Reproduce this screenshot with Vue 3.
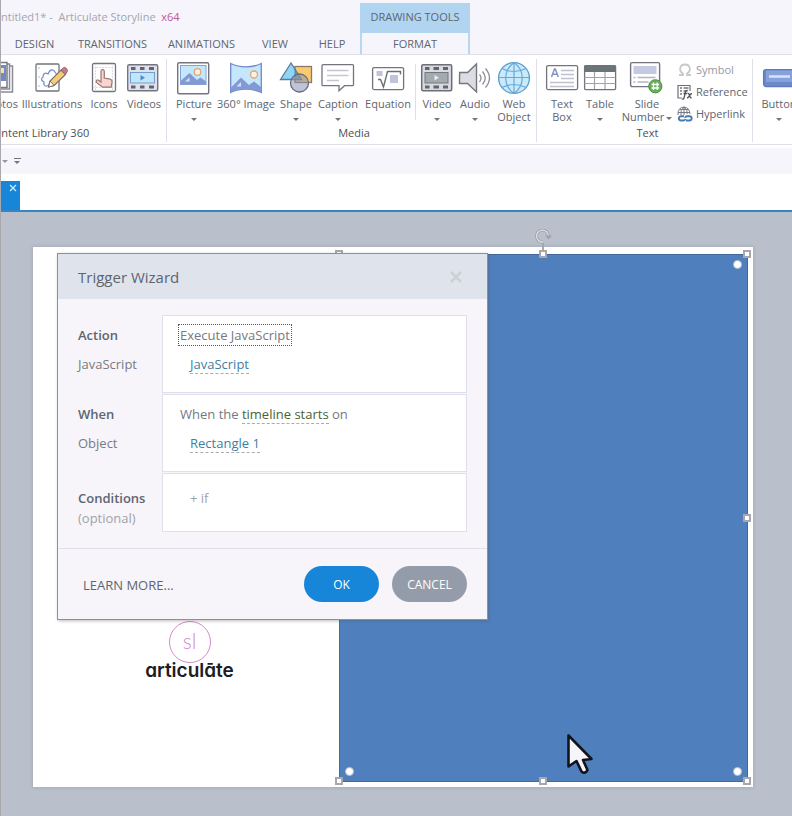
<script setup>
import { ref } from 'vue'

const tabs = [
  { name: 'DESIGN', cls: 'w67' },
  { name: 'TRANSITIONS', cls: 'w89' },
  { name: 'ANIMATIONS', cls: 'w89' },
  { name: 'VIEW', cls: 'w58' },
  { name: 'HELP', cls: 'w56' },
]

const library = [
  { icon: 'photos', label: 'Photos', cls: 'w40' },
  { icon: 'illustrations', label: 'Illustrations', cls: 'w64' },
  { icon: 'icons', label: 'Icons', cls: 'w40' },
  { icon: 'videos', label: 'Videos', cls: 'w40' },
]
const mediaA = [
  { icon: 'picture', label: 'Picture', cls: 'w40', menu: true },
  { icon: 'pano', label: '360° Image', cls: 'w64' },
  { icon: 'shape', label: 'Shape', cls: 'w36', menu: true },
  { icon: 'caption', label: 'Caption', cls: 'w48', menu: true },
  { icon: 'equation', label: 'Equation', cls: 'w52' },
]
const mediaB = [
  { icon: 'video', label: 'Video', cls: 'w38', menu: true },
  { icon: 'audio', label: 'Audio', cls: 'w38', menu: true },
  { icon: 'web', label: 'Web Object', cls: 'w40' },
]
const textTools = [
  { icon: 'textbox', label: 'Text Box', cls: 'w36' },
  { icon: 'table', label: 'Table', cls: 'w40', menu: true },
  { icon: 'slidenum', label: 'Slide Number', cls: 'w54', inlineMenu: true },
]
const textLinks = [
  { icon: 'symbol', label: 'Symbol', off: true },
  { icon: 'reference', label: 'Reference' },
  { icon: 'hyperlink', label: 'Hyperlink' },
]
const handles = ['nw', 'n', 'ne', 'e', 'se', 's', 'sw', 'w']
const open = ref(true)
</script>

<template>
  <div class="window">
    <svg class="sprite" aria-hidden="true">
      <symbol id="photos" viewBox="0 0 36 36">
        <path d="M8 6h22.500v26H8z" fill="#fff" stroke="#8b8b97" stroke-width="1.500" />
        <path d="M5 4h22.500v25H5z" fill="#fff" stroke="#8b8b97" stroke-width="1.500" />
        <path d="M3 2.500h22v25H3z" fill="#fff" stroke="#777985" stroke-width="1.500" />
        <path d="M5 5h19v16H5z" fill="#7189c8" />
        <path d="M19 8h3v5h-3z" fill="#f6e3a0" />
      </symbol>
      <symbol id="illustrations" viewBox="0 0 36 36">
        <rect x="2" y="4" width="23" height="27" rx="1" fill="#fff" stroke="#74747e" stroke-width="1.300" />
        <path d="M4 8h2M4 17h2M4 26h2" stroke="#b9b9c6" />
        <path d="M15 25c-3 2-6 1-5-3-2-1-4-3-1-5 0-3 2-5 5-3 2-5 5-5 7-2l2 3" fill="none" stroke="#7c8fce" stroke-width="1.300" />
        <path d="M14.500 27l1.500-6L27 10l4.500 4.500-11.300 11z" fill="#f6cd76" stroke="#77706c" stroke-width="1.200" />
        <path d="M14.500 27l1.500-6 4.200 4.500z" fill="#fff" stroke="#77706c" />
        <path d="M27 10l2.500-2.300c1.600-1.200 4.500 1.200 3.800 3.600l-1.800 3.200z" fill="#c9798c" stroke="#8b6a78" />
      </symbol>
      <symbol id="icons" viewBox="0 0 36 36">
        <rect x="6.500" y="3.500" width="23" height="28" rx="1.500" fill="#fff" stroke="#74747e" stroke-width="1.300" />
        <path d="M9.500 4v27M26.500 4v27M7 7.500h22M7 27.500h22" stroke="#dcdce6" stroke-dasharray="2 1" />
        <path d="M15 22V11.500c0-2.400 3.300-2.400 3.300 0v6.500l6 1.200c1.600.5 1.900 1.500 1.700 3l-.8 5H16.600L10.500 22.400c-1-1.700.6-3 2-2.200z" fill="#f9d5cf" stroke="#9c7671" stroke-width="1.200" />
      </symbol>
      <symbol id="videos" viewBox="0 0 36 36">
        <rect x="1.700" y="4.700" width="30" height="26" rx="1.500" fill="#dfe1ec" stroke="#74747e" stroke-width="1.400" />
        <path d="M5 8.500h4.500M14 8.500h4.500M23 8.500h5M5 27h4.500M14 27h4.500M23 27h5" stroke="#62656e" stroke-width="3" />
        <rect x="4.500" y="12.500" width="24" height="10.500" fill="#c3e5fc" stroke="#6f9fce" />
        <path d="M14.500 15v5.500l4.500-2.700z" fill="#4f8ac4" />
      </symbol>
      <symbol id="picture" viewBox="0 0 36 36">
        <rect x="1.700" y="2.700" width="31" height="31" rx="1.500" fill="#fff" stroke="#74747e" stroke-width="1.400" />
        <rect x="4.500" y="5.500" width="25.500" height="19" fill="#c5e7fd" stroke="#84a3d8" />
        <circle cx="21.500" cy="12" r="3.300" fill="#fff3da" stroke="#dfa57d" stroke-width="1.300" />
        <path d="M4.500 21l9-8 7.500 7 3.500-2.500 5.500 4v3H4.500z" fill="#8299d4" />
        <path d="M9 21.500l4.500-4v4z" fill="#d5e0f7" />
      </symbol>
      <symbol id="pano" viewBox="0 0 36 36">
        <path d="M2.700 3.500C12 8 24 8 33.300 3.500v29C24 28 12 28 2.700 32.500z" fill="#c5e7fd" stroke="#7189c8" stroke-width="1.300" />
        <circle cx="26" cy="14.500" r="3.500" fill="#fff3da" stroke="#dfa57d" stroke-width="1.300" />
        <path d="M3 27.500l10-10 8 7.500 5-3.500 7 5.500v5.200C24 28 12 28 3 32.200z" fill="#8299d4" />
        <path d="M8.500 26.500L13 22v4.500z" fill="#d5e0f7" />
      </symbol>
      <symbol id="shape" viewBox="0 0 36 36">
        <rect x="17" y="6.500" width="16.500" height="16" fill="#f9cb70" stroke="#88796a" stroke-width="1.300" />
        <path d="M13 3L2.500 19.500h21z" fill="#8fd5fa" stroke="#5a7c99" stroke-width="1.300" />
        <path d="M17 9.500l6.500 10H17z" fill="#86a07c" stroke="#5a7c99" />
        <circle cx="21.500" cy="23" r="9" fill="#8b92b4" fill-opacity=".55" stroke="#676b7c" stroke-width="1.300" />
      </symbol>
      <symbol id="caption" viewBox="0 0 36 36">
        <path d="M2.500 4.700h30q1 0 1 1v19q0 1-1 1h-8l-5.500 5v-5h-16q-1 0-1-1v-19q0-1 1-1z" fill="#fff" stroke="#74747e" stroke-width="1.300" />
        <path d="M7 10.500h21.500M7 15.500h21.500M7 20.500h12" stroke="#c6c6d2" stroke-width="1.500" />
      </symbol>
      <symbol id="equation" viewBox="0 0 36 36">
        <rect x="2.600" y="7.600" width="31" height="22" rx="1.500" fill="#fff" stroke="#74747e" stroke-width="1.300" />
        <path d="M6.500 11h6v5h-6zM20 15h8v8h-8z" fill="#c1c3dc" />
        <path d="M8 19.500h2.500l3 7.500 4-15.500h13v3" fill="none" stroke="#6b6f79" stroke-width="1.400" />
      </symbol>
      <symbol id="video" viewBox="0 0 36 36">
        <rect x="2.700" y="4.700" width="30" height="26" rx="1.500" fill="#d9d9e0" stroke="#6c6f77" stroke-width="1.500" />
        <path d="M6 8.500h4.500M14.500 8.500h5.500M24 8.500h5M6 27h4.500M14.500 27h5.500M24 27h5" stroke="#62656b" stroke-width="3" />
        <rect x="6" y="12.500" width="23" height="10.500" fill="#a3abae" stroke="#70787c" />
        <path d="M15.500 15v5.500l4.500-2.700z" fill="#e8eff1" />
      </symbol>
      <symbol id="audio" viewBox="0 0 36 36">
        <path d="M2.600 12.500h8L19.500 4v28l-9-8.500h-8z" fill="#dcdce2" stroke="#74777f" stroke-width="1.400" />
        <path d="M22.500 14.500q3 3.500 0 7.500M25.500 11.500q5.500 6.500 0 13M28.500 8.500q8 9.500 0 19" fill="none" stroke="#8c8f98" stroke-width="1.300" />
      </symbol>
      <symbol id="web" viewBox="0 0 36 36">
        <circle cx="18" cy="18" r="15.400" fill="#c9eafd" stroke="#589cca" stroke-width="1.300" />
        <path d="M18 2.500v31M2.500 17.500h31M18 2.500c-11 8-11 23 0 31M18 2.500c11 8 11 23 0 31M6 8.500q12 6 24 0M6 27.500q12-6 24 0" fill="none" stroke="#69a9d4" stroke-width="1.200" />
      </symbol>
      <symbol id="textbox" viewBox="0 0 36 36">
        <rect x="2.600" y="5.600" width="31" height="24" rx="1.500" fill="#fff" stroke="#74747e" stroke-width="1.300" />
        <path d="M7.500 17l3-8h.8l3 8M8.500 14.300h5" fill="none" stroke="#8294cd" stroke-width="1.500" />
        <path d="M17 10.500h13M17 14.500h13M17 18.500h13M6 22.500h24M6 26.500h24" stroke="#bfc0d0" stroke-width="1.400" />
      </symbol>
      <symbol id="table" viewBox="0 0 36 36">
        <rect x="2.600" y="5.600" width="31" height="24" rx="1" fill="#fff" stroke="#74747e" stroke-width="1.300" />
        <path d="M2.500 5.500h31v6.500h-31z" fill="#6b7579" />
        <path d="M2.500 17.500h31M2.500 23.500h31M12.500 12v17M23 12v17" stroke="#a2a2af" stroke-width="1.200" />
      </symbol>
      <symbol id="slidenum" viewBox="0 0 36 36">
        <rect x="1.600" y="2.600" width="29" height="24" rx="1.500" fill="#fff" stroke="#74747e" stroke-width="1.400" />
        <path d="M4.500 6h23v8h-23z" fill="#c4cae2" />
        <path d="M4.500 17.500h2M8.500 17.500h18M4.500 22h2M8.500 22h11" stroke="#b4b5c4" stroke-width="1.500" />
        <circle cx="26.300" cy="26.300" r="6.600" fill="#69ad58" stroke="#4e8f45" />
        <path d="M24.500 22.500v7.500M28.200 22.500v7.500M22.500 24.500h7.700M22.500 28h7.700" stroke="#fff" stroke-width="1.300" />
      </symbol>
      <symbol id="button" viewBox="0 0 36 36">
        <rect x="2.600" y="9.600" width="40" height="17" rx="2.500" fill="#6d89cc" stroke="#6179b8" stroke-width="1.300" />
        <path d="M5 10.500h35v11.500H5z" fill="#86a2dc" />
        <path d="M8 16.500h21" stroke="#d8e3fa" stroke-width="2.500" />
      </symbol>
      <symbol id="symbol" viewBox="0 0 16 16">
        <path d="M2 13h4v-1.500C1.500 9 2.500 2.500 8 2.500s6.500 6.500 2 9V13h4" fill="none" stroke="#c8c8cd" stroke-width="1.800" />
      </symbol>
      <symbol id="reference" viewBox="0 0 16 16">
        <path d="M5 14H1V1.500h12V7" fill="none" stroke="#6e7076" stroke-width="1.200" />
        <path d="M3 4h2M6.500 4h5M3 7h2M6.500 7h4M3 10h2" stroke="#75777d" stroke-width="1.700" />
        <path d="M10.500 6.500q-1.800-.5-2.200 2L7 14q-.5 1.500-2 1M6.500 9.500h3.500M10.500 9.500q1.500-.4 2 2t2 2.500M15 9.500q-1.500.3-2.500 2.200T10 14" fill="none" stroke="#505258" stroke-width="1.300" />
      </symbol>
      <symbol id="hyperlink" viewBox="0 0 16 16">
        <path d="M1 9q-.5-7.500 6-8 5.500.5 6 7M1 6.500h12M7 1v8M7 1Q3 4 4 9M7 1q4 3 3.200 7M2.500 3.500h9" fill="none" stroke="#777a80" />
        <path d="M7 10.200H4a2 2 0 0 0 0 4.300h2.500q1.500 0 2-1.500M9 14.500h3.500a2 2 0 0 0 0-4.300H10q-1.500 0-2 1.500" fill="none" stroke="#447bb3" stroke-width="1.900" />
      </symbol>
    </svg>

    <header class="header">
      <div class="title">ntitled1* -&nbsp; Articulate Storyline&nbsp; <span class="arch">x64</span></div>
      <nav class="tabs">
        <button v-for="t in tabs" :key="t.name" class="tab" :class="t.cls">{{ t.name }}</button>
      </nav>
      <div class="context">
        <div class="context-name">DRAWING TOOLS</div>
        <button class="tab context-tab">FORMAT</button>
      </div>
    </header>

    <section class="ribbon">
      <div class="group library">
        <div class="tools">
          <button v-for="i in library" :key="i.icon" class="tool" :class="i.cls">
            <svg class="icon"><use :href="'#' + i.icon" /></svg>
            <span class="label">{{ i.label }}</span>
          </button>
        </div>
        <div class="group-name">Content Library 360</div>
      </div>
      <div class="group media">
        <div class="tools">
          <button v-for="i in mediaA" :key="i.icon" class="tool" :class="i.cls">
            <svg class="icon"><use :href="'#' + i.icon" /></svg>
            <span class="label">{{ i.label }}</span>
            <i v-if="i.menu" class="caret"></i>
          </button>
          <span class="rule"></span>
          <button v-for="i in mediaB" :key="i.icon" class="tool" :class="i.cls">
            <svg class="icon"><use :href="'#' + i.icon" /></svg>
            <span class="label" :class="{ wrap: i.icon === 'web' }">{{ i.label }}</span>
            <i v-if="i.menu" class="caret"></i>
          </button>
        </div>
        <div class="group-name">Media</div>
      </div>
      <div class="group">
        <div class="tools">
          <button v-for="i in textTools" :key="i.icon" class="tool" :class="i.cls">
            <svg class="icon"><use :href="'#' + i.icon" /></svg>
            <span class="label wrap">{{ i.label }}<i v-if="i.inlineMenu" class="caret inline"></i></span>
            <i v-if="i.menu" class="caret"></i>
          </button>
          <div class="links">
            <button v-for="l in textLinks" :key="l.icon" class="link" :class="{ off: l.off }">
              <svg class="mini"><use :href="'#' + l.icon" /></svg>{{ l.label }}
            </button>
          </div>
        </div>
        <div class="group-name">Text</div>
      </div>
      <div class="group last">
        <div class="tools">
          <button class="tool w38">
            <svg class="icon"><use href="#button" /></svg>
            <span class="label">Button</span>
            <i class="caret"></i>
          </button>
        </div>
      </div>
    </section>

    <div class="quickbar">
      <i class="caret pale"></i>
      <i class="overflow"></i>
    </div>

    <div class="doctabs">
      <div class="doctab">
        <button class="doctab-close" aria-label="Close tab">
          <svg viewBox="0 0 8 8"><path d="M1 1l6 6M7 1L1 7" stroke="#c9ecff" stroke-width="1.300" /></svg>
        </button>
      </div>
    </div>

    <main class="canvas">
      <div class="slide">
        <div class="logo">
          <span class="ring">sl</span>
          <span class="brand">articulāte</span>
        </div>
        <div class="rect">
          <svg class="rotate" viewBox="0 0 18 22">
            <path d="M9 14v8" stroke="#a5a7ae" stroke-width="2" />
            <path d="M9.500 13A6 6 0 1 1 14.500 7" fill="none" stroke="#9fa2aa" stroke-width="3" />
            <path d="M9.500 13A6 6 0 1 1 14.500 7" fill="none" stroke="#dcdfe4" stroke-width="1.300" />
            <path d="M11 6.500h7l-3.500 4z" fill="#9fa2aa" />
          </svg>
          <i v-for="h in handles" :key="h" class="handle" :class="h"></i>
          <i class="dot d-ne"></i><i class="dot d-se"></i><i class="dot d-sw"></i>
        </div>
      </div>

      <form v-if="open" class="dialog" @submit.prevent>
        <div class="dialog-head">
          <h1>Trigger Wizard</h1>
          <button type="button" class="close" aria-label="Close" @click="open = false">
            <svg viewBox="0 0 12 12"><path d="M1 1l10 10M11 1L1 11" stroke="#cfd0d7" stroke-width="2.600" /></svg>
          </button>
        </div>
        <div class="fields">
          <div class="names">
            <strong>Action</strong>
            <span>JavaScript</span>
          </div>
          <div class="box">
            <div><a href="#action" class="focused">Execute JavaScript</a></div>
            <div class="sub"><a href="#script" class="pick">JavaScript</a></div>
          </div>
          <div class="names">
            <strong>When</strong>
            <span>Object</span>
          </div>
          <div class="box">
            <div>When the&nbsp;<a href="#when" class="pick green">timeline starts</a> on</div>
            <div class="sub"><a href="#object" class="pick">Rectangle 1</a></div>
          </div>
          <div class="names cond">
            <strong>Conditions</strong>
            <span class="faint">(optional)</span>
          </div>
          <div class="box cond">
            <div class="sub"><button type="button" class="add">+ if</button></div>
          </div>
        </div>
        <div class="dialog-foot">
          <a href="#learn" class="learn">LEARN MORE...</a>
          <button class="pill ok">OK</button>
          <button type="button" class="pill cancel">CANCEL</button>
        </div>
      </form>

      <svg class="cursor" viewBox="0 0 28 42">
        <path d="M2.500 2.500v31l8-5.500 5 10.500q3.500 3 6-1.500L17 27l8.500-1z" fill="#f6f5fa" stroke="#10151d" stroke-width="2.600" stroke-linejoin="round" />
      </svg>
    </main>
  </div>
</template>

<style>
body {
  background: #b9c0cb;
}
</style>

<style scoped>
* {
  box-sizing: border-box;
}
.window {
  display: flex;
  flex-direction: column;
  min-height: 100vh;
  border-left: 1px solid #a9a9ad;
  background: #fff;
  color: #5d6570;
  font: 11px/13px "Open Sans", "Noto Sans", sans-serif;
  overflow: hidden;
}
.sprite {
  position: absolute;
  width: 0;
  height: 0;
}
button {
  padding: 0;
  border: 0;
  background: none;
  color: inherit;
  font: inherit;
}
a {
  color: inherit;
  text-decoration: none;
}

.header {
  display: grid;
  grid-template: 33px 21px / auto 1fr;
  background: #f6f5fb;
  border-bottom: 1px solid #dfdfea;
}
.title {
  align-self: center;
  color: #a5a5ab;
  white-space: nowrap;
}
.arch {
  color: #bd579c;
}
.tabs {
  grid-row: 2;
  display: flex;
}
.context {
  grid-area: 1 / 2 / 3 / 3;
  display: grid;
  grid-template-rows: 30px 21px;
  width: 110px;
  padding-top: 3px;
}
.context-name {
  display: grid;
  place-items: center;
  padding-bottom: 3px;
  background: #b1d4f0;
}
.context-tab {
  border: solid #b9d7f0;
  border-width: 0 2px;
}
.w36 { width: 36px; }
.w38 { width: 38px; }
.w40 { width: 40px; }
.w48 { width: 48px; }
.w52 { width: 52px; }
.w54 { width: 54px; }
.w56 { width: 56px; }
.w58 { width: 58px; }
.w64 { width: 64px; }
.w67 { width: 67px; }
.w89 { width: 89px; }

.ribbon {
  display: flex;
  height: 90px;
  border-bottom: 1px solid #dfdfea;
  overflow: hidden;
}
.group {
  position: relative;
  display: flex;
  flex: none;
  flex-direction: column;
  padding-left: 7px;
  padding-right: 2px;
}
.group::after {
  content: "";
  position: absolute;
  right: 0;
  top: 4px;
  bottom: 2px;
  width: 1px;
  background: #dfdfea;
}
.group.last::after {
  display: none;
}
.library {
  width: 254px;
  margin-left: -88px;
  padding: 0 3px 0 0;
}
.media {
  padding-right: 3px;
}
.tools {
  display: flex;
  height: 71px;
}
.library .tools {
  justify-content: flex-end;
}
.tool {
  display: flex;
  flex: none;
  flex-direction: column;
  align-items: center;
  padding-top: 5px;
}
.icon {
  flex: none;
  width: 36px;
  height: 36px;
  overflow: visible;
}
.label {
  margin-top: 1px;
  white-space: nowrap;
}
.label.wrap {
  white-space: normal;
}
.caret {
  width: 0;
  height: 0;
  margin-top: 8px;
  border: solid transparent;
  border-width: 3px 3px 0;
  border-top-color: #73757b;
}
.caret.inline {
  display: inline-block;
  margin: 0 0 1px 2px;
}
.rule {
  width: 1px;
  margin: 9px 2px 6px 1px;
  background: #dfdfea;
}
.group-name {
  text-align: center;
  color: #4b5058;
}
.links {
  width: 77px;
  padding: 4px 0 0 3px;
}
.link {
  display: flex;
  align-items: center;
  gap: 3px;
  height: 22px;
  padding-bottom: 1px;
}
.link.off {
  color: #96989f;
}
.mini {
  flex: none;
  width: 16px;
  height: 16px;
}

.quickbar {
  display: flex;
  align-items: center;
  gap: 6px;
  height: 26px;
  margin: 3px 0 7px;
  padding-left: 1px;
  background: #f6f5fb;
}
.quickbar .caret {
  margin: 0;
}
.caret.pale {
  border-top-color: #96989f;
}
.overflow {
  width: 7px;
  height: 6px;
  background: linear-gradient(#73757b, #73757b) top / 7px 1px no-repeat;
  position: relative;
}
.overflow::after {
  content: "";
  position: absolute;
  top: 3px;
  left: 0;
  border: solid transparent;
  border-width: 3px 3px 0;
  border-top-color: #73757b;
}
.doctabs {
  height: 31px;
  border-bottom: 2px solid #3684c2;
}
.doctab {
  width: 19px;
  height: 29px;
  padding: 3px 3px 0 8px;
  background: #1785d8;
}
.doctab-close {
  display: block;
  width: 8px;
  height: 8px;
}
.doctab-close svg,
.close svg {
  display: block;
  width: 100%;
}

.canvas {
  position: relative;
  flex: 1;
  padding: 35px 39px 29px 32px;
  background: #b9c0cb;
}
.slide {
  position: relative;
  aspect-ratio: 4 / 3;
  background: #fff;
  box-shadow: 0 0 3px 1px #a9aeba;
}
.rect {
  position: absolute;
  inset: 7px 5px 5px 306px;
  background: #4f80bd;
  border: 1px solid #43699b;
}
.handle {
  position: absolute;
  width: 8px;
  height: 8px;
  border: 2px solid #a7a8af;
  background: #fff;
}
.nw, .n, .ne { top: -5px; }
.sw, .s, .se { bottom: -4px; }
.e, .w { top: calc(50% - 4px); }
.nw, .w, .sw { left: -5px; }
.ne, .e, .se { right: -4px; }
.n, .s { left: calc(50% - 5px); }
.dot {
  position: absolute;
  width: 9px;
  height: 9px;
  border: 1px solid #b5bac6;
  border-radius: 50%;
  background: #fff;
}
.d-ne { top: 5px; right: 5px; }
.d-se { bottom: 5px; right: 5px; }
.d-sw { bottom: 5px; left: 5px; }
.rotate {
  position: absolute;
  top: -26px;
  left: calc(50% - 10px);
  width: 18px;
  height: 22px;
}
.logo {
  position: absolute;
  left: 96px;
  top: 374px;
  width: 121px;
  display: flex;
  flex-direction: column;
  align-items: center;
}
.ring {
  width: 42px;
  height: 42px;
  border: 1px solid #d48bcb;
  border-radius: 50%;
  color: #d48bcb;
  font: 300 21px/38px Lato, sans-serif;
  text-align: center;
}
.brand {
  color: #1d1d1f;
  font: 600 19px/16px Inter, sans-serif;
  font-feature-settings: "cv11";
}

.dialog {
  position: absolute;
  top: 41px;
  left: 56px;
  width: 431px;
  border: 1px solid #8d8f99;
  background: #f7f5fa;
  box-shadow: 1px 1px 3px #50556066;
  font-size: 13px;
  line-height: 20px;
}
.dialog-head {
  display: flex;
  align-items: center;
  justify-content: space-between;
  height: 45px;
  padding: 0 25px 0 20px;
  background: #dfe3ec;
}
h1 {
  margin: 0;
  font-size: 15px;
  font-weight: 400;
}
.close {
  width: 12px;
  height: 12px;
}
.fields {
  display: grid;
  grid-template-columns: 84px 1fr;
  gap: 1px 0;
  padding: 16px 20px;
}
.names,
.box {
  display: flex;
  flex-direction: column;
  gap: 9px;
  min-height: 78px;
  padding-top: 10px;
}
.names strong {
  font-weight: 600;
}
.names span {
  color: #777b84;
}
.names.cond {
  gap: 0;
  padding-top: 15px;
}
.names .faint {
  color: #a0a2aa;
}
.box {
  padding: 9px 17px 0;
  border: 1px solid #e0e0ec;
  background: #fff;
  color: #747983;
}
.names.cond,
.box.cond {
  min-height: 59px;
}
.box.cond {
  padding-top: 14px;
}
.sub {
  padding-left: 10px;
}
.focused {
  display: inline-block;
  margin-left: -1px;
  padding: 0 1px;
  outline: 1px dotted #55585f;
}
.pick {
  display: inline-block;
  height: 20px;
  border-bottom: 1px dashed #aaabb2;
  color: #3c7fa5;
}
.green {
  color: #4b6331;
}
.add {
  color: #a0a2aa;
}
.dialog-foot {
  display: flex;
  align-items: center;
  gap: 13px;
  height: 71px;
  padding: 0 20px 0 25px;
  border-top: 1px solid #dfe0ec;
}
.learn {
  margin-right: auto;
  padding-top: 2px;
}
.pill {
  width: 75px;
  height: 36px;
  padding-top: 1px;
  border-radius: 18px;
  color: #fff;
  font-size: 12px;
}
.ok {
  background: #1785d8;
}
.cancel {
  background: #949ba9;
}
.cursor {
  position: absolute;
  left: 565px;
  top: 521px;
  width: 28px;
  height: 42px;
}
</style>
